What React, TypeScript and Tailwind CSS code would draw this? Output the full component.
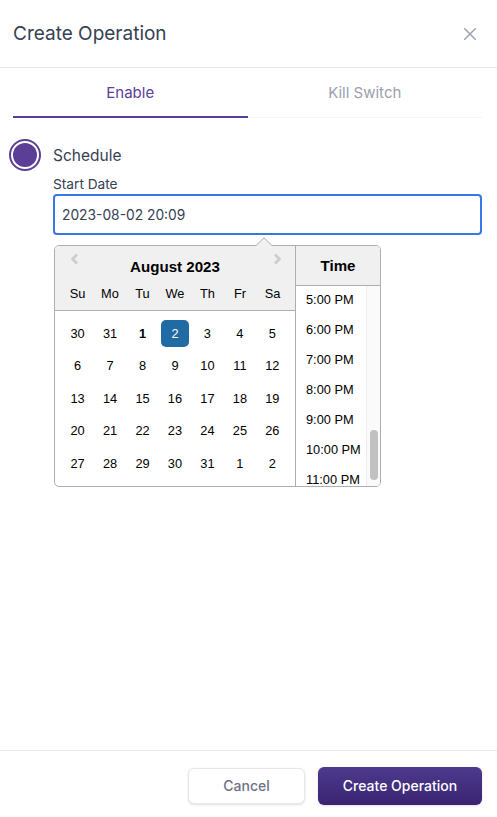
import { useState } from 'react'

const weeks: { d: number; out?: boolean }[][] = [
  [{ d: 30, out: true }, { d: 31, out: true }, { d: 1 }, { d: 2 }, { d: 3 }, { d: 4 }, { d: 5 }],
  [{ d: 6 }, { d: 7 }, { d: 8 }, { d: 9 }, { d: 10 }, { d: 11 }, { d: 12 }],
  [{ d: 13 }, { d: 14 }, { d: 15 }, { d: 16 }, { d: 17 }, { d: 18 }, { d: 19 }],
  [{ d: 20 }, { d: 21 }, { d: 22 }, { d: 23 }, { d: 24 }, { d: 25 }, { d: 26 }],
  [{ d: 27 }, { d: 28 }, { d: 29 }, { d: 30 }, { d: 31 }, { d: 1, out: true }, { d: 2, out: true }],
]

const dayNames = ['Su', 'Mo', 'Tu', 'We', 'Th', 'Fr', 'Sa']
const times = ['5:00 PM', '6:00 PM', '7:00 PM', '8:00 PM', '9:00 PM', '10:00 PM', '11:00 PM']

function DatePicker() {
  return (
    <div className="relative mt-[10px] ml-px w-[327px]">
      {/* popper arrow */}
      <svg className="absolute -top-[8px] left-[201px]" width="18" height="9" viewBox="0 0 18 9">
        <path d="M0.5 9 L9 0.8 L17.5 9" fill="#f0f0f0" stroke="#aeaeae" strokeWidth="1" />
      </svg>
      <div className="flex overflow-hidden rounded-[5px] border border-[#aeaeae] bg-white font-['Liberation_Sans',Arial,sans-serif] text-[12.8px] text-black">
        {/* month */}
        <div className="relative w-[240px]">
          <button className="absolute left-[13px] top-[6px] flex h-[14px] w-[12px] items-center justify-center">
            <svg width="9" height="12" viewBox="0 0 9 12">
              <path d="M7 1.5 L2.5 6 L7 10.5" fill="none" stroke="#cccccc" strokeWidth="2.6" />
            </svg>
          </button>
          <button className="absolute right-[12px] top-[6px] flex h-[14px] w-[12px] items-center justify-center">
            <svg width="9" height="12" viewBox="0 0 9 12">
              <path d="M2 1.5 L6.5 6 L2 10.5" fill="none" stroke="#cccccc" strokeWidth="2.6" />
            </svg>
          </button>
          <div className="border-b border-[#aeaeae] bg-[#f0f0f0] pt-[10px]">
            <div className="h-[21px] text-center text-[15.1px] font-bold leading-[21px]">August 2023</div>
            <div className="flex justify-center">
              {dayNames.map((n) => (
                <div key={n} className="m-[2.66px] h-[27.2px] w-[27.2px] text-center leading-[27.2px]">
                  {n}
                </div>
              ))}
            </div>
          </div>
          <div className="m-[6.4px]">
            {weeks.map((w, i) => (
              <div key={i} className="flex">
                {w.map((c, j) => {
                  const selected = i === 0 && c.d === 2 && !c.out
                  const today = i === 0 && c.d === 1 && !c.out
                  return (
                    <div
                      key={j}
                      className={
                        selected
                          ? 'm-[2.66px] h-[27.2px] w-[27.2px] rounded-[5px] bg-[#216ba5] text-center leading-[27.2px] text-white'
                          : today
                            ? 'm-[2.66px] h-[27.2px] w-[27.2px] text-center font-bold leading-[27.2px]'
                            : 'm-[2.66px] h-[27.2px] w-[27.2px] text-center leading-[27.2px]'
                      }
                    >
                      {c.d}
                    </div>
                  )
                })}
              </div>
            ))}
          </div>
        </div>
        {/* time */}
        <div className="flex w-[85px] flex-col border-l border-[#aeaeae]">
          <div className="h-[40px] shrink-0 border-b border-[#aeaeae] bg-[#f0f0f0] pt-[8px]">
            <div className="h-[23px] text-center text-[15.1px] font-bold leading-[23px]">Time</div>
          </div>
          <div className="relative min-h-0 flex-1 overflow-hidden">
            <ul className="absolute inset-x-0 -top-px pr-[14px]">
              {times.map((t) => (
                <li key={t} className="h-[30px] whitespace-nowrap px-[10px] leading-[30px]">
                  {t}
                </li>
              ))}
            </ul>
            <div className="absolute right-0 top-0 h-full w-[14px] border-l border-[#ececec] bg-[#fafafa]">
              <div className="absolute left-[3px] top-[144px] h-[50px] w-[8px] rounded-full bg-[#c1c1c1]" />
            </div>
          </div>
        </div>
      </div>
    </div>
  )
}

export default function App() {
  const [tab, setTab] = useState<'enable' | 'kill'>('enable')

  return (
    <div className="flex h-[817px] w-full flex-col bg-white font-['Inter',sans-serif] text-gray-700">
      <div className="flex h-[68px] shrink-0 items-center justify-between border-b border-gray-200 pl-[13px] pr-[20px] pt-[2px]">
        <h1 className="text-[19px] text-gray-700">Create Operation</h1>
        <button className="-mt-[2px] flex h-[14px] w-[14px] items-center justify-center">
          <svg width="12" height="12" viewBox="0 0 12 12">
            <path d="M0.75 0.75 L11.25 11.25 M11.25 0.75 L0.75 11.25" stroke="#9ca3af" strokeWidth="1.5" strokeLinecap="round" />
          </svg>
        </button>
      </div>

      <div className="flex-1 pl-[13px] pr-[15px]">
        <div className="grid grid-cols-2 border-b border-gray-100">
          <button
            onClick={() => setTab('enable')}
            className={
              tab === 'enable'
                ? '-mb-px flex h-[50px] items-center justify-center border-b-2 border-[#5b3e96] pt-[2px] text-[15px] text-[#5b3e96]'
                : '-mb-px flex h-[50px] items-center justify-center border-b-2 border-transparent pt-[2px] text-[15px] text-gray-400'
            }
          >
            Enable
          </button>
          <button
            onClick={() => setTab('kill')}
            className={
              tab === 'kill'
                ? '-mb-px flex h-[50px] items-center justify-center border-b-2 border-[#5b3e96] pt-[2px] text-[15px] text-[#5b3e96]'
                : '-mb-px flex h-[50px] items-center justify-center border-b-2 border-transparent pt-[2px] text-[15px] text-gray-400'
            }
          >
            Kill Switch
          </button>
        </div>

        <div className="-ml-[4px] mt-[21px] flex items-center gap-[12px]">
          <span className="h-[32px] w-[32px] rounded-full border-2 border-[#5b3e96] p-[2px]">
            <span className="block h-full w-full rounded-full bg-[#5b3e96]" />
          </span>
          <span className="pt-[2px] text-[15.5px] text-gray-700">Schedule</span>
        </div>

        <div className="ml-[40px]">
          <label className="mt-[3px] block text-[13.7px] leading-5 text-gray-700">Start Date</label>
          <input
            type="text"
            readOnly
            value="2023-08-02 20:09"
            className="block h-[41px] w-full rounded-[4px] border-2 border-[#3b76e8] px-[7px] text-[13.8px] text-gray-700 outline-none"
          />
          <DatePicker />
        </div>
      </div>

      <div className="flex h-[67px] shrink-0 items-center justify-end gap-[13px] border-t border-gray-200 pr-[15px] pt-[4px]">
        <button className="h-[36px] w-[117px] rounded-md border border-gray-200 bg-white text-sm font-medium text-gray-500 shadow-sm">
          Cancel
        </button>
        <button className="h-[38px] w-[164px] rounded-md bg-linear-to-b from-[#4d3a8d] to-[#3a2472] text-sm font-medium text-white shadow-sm">
          Create Operation
        </button>
      </div>
    </div>
  )
}
